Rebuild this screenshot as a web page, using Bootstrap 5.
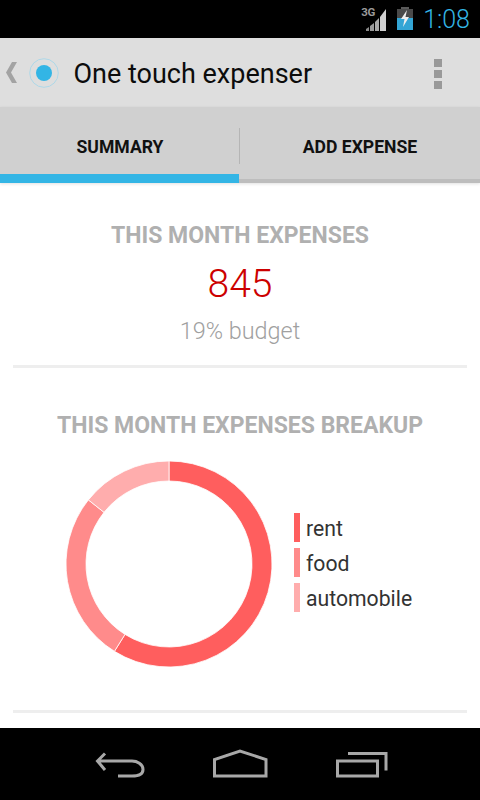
<!doctype html>
<html lang="en">
<head>
<meta charset="utf-8">
<title>One touch expenser</title>
<link rel="stylesheet" href="https://cdn.jsdelivr.net/npm/bootstrap@5.3.0/dist/css/bootstrap.min.css">
<style>
html,body{height:100%;margin:0;background:#000}
body{font-family:Roboto,"Liberation Sans",sans-serif;width:480px;height:800px;overflow:hidden}
.shell{height:800px;width:480px}
.statusbar{height:38px;background:#000;padding-right:10px}
.sig-wrap{width:28px;height:30px;margin-right:9px;margin-top:1px}
.net{font-size:11.500px;font-weight:700;color:#9a9a9a;line-height:1;position:absolute;left:1px;top:2px;letter-spacing:-.3px}
.clock{font-size:25px;color:#33b5e5;font-weight:300;line-height:38px;margin-left:10px;padding-top:1px}
.actionbar{height:69px;background:#dedede;padding-left:6px}
.appicon{margin-left:11.500px;flex:none}
.apptitle{font-size:27px;color:#0c0c0c;font-weight:400;margin-left:15px;line-height:1;margin-bottom:0;padding-top:4px}
.dots{gap:3px;margin-right:38px;margin-top:3px}
.dots i{display:block;width:8px;height:8px;background:#999}
.tabsbar{height:76px;background:#d0d0d0;border-bottom:4px solid #bdbdbd;position:relative;box-shadow:0 1px 3px rgba(0,0,0,.12)}
.tabitem{width:240px;height:72px;font-size:17.600px;font-weight:700;color:#111;position:relative;line-height:1;padding-top:10px}
.tabitem.on::after{content:"";position:absolute;left:0;right:1px;bottom:-4px;height:9px;background:#33b5e5}
.tabsep{position:absolute;left:239px;top:21px;width:1px;height:36px;background:#b5b5b5}
.pagebody{height:545px;background:#fff;overflow:hidden;padding:0 13px}
.block{border-bottom:3px solid #eeeeee}
.b-one{height:185px;padding-top:40px}
.b-two{height:345px;padding-top:45px}
.heading{font-size:23px;font-weight:700;color:#b0b0b0;line-height:26px;margin:0}
.amount{font-size:39px;font-weight:300;color:#cc0000;line-height:42px;margin-top:14px}
.budget{font-size:23.400px;font-weight:300;color:#a0a0a0;line-height:26px;margin-top:13px}
.chart-row{margin-top:22px;height:206px}
.donut{width:206px;height:206px;margin-left:53px;flex:none}
.legend{margin-left:22px;gap:6px;margin-top:-3px}
.lg-item{height:29px;font-size:21.200px;color:#333;line-height:31px}
.sw{display:block;width:6px;height:29px;margin-right:6px}
.c1{background:#ff5e5e}.c2{background:#ff8b8b}.c3{background:#ffadad}
.navbar-bot{height:72px;background:#000;flex:none}
</style>
</head>
<body>
<div class="shell d-flex flex-column">
  <div class="statusbar d-flex justify-content-end align-items-center">
    <div class="sig-wrap position-relative">
      <span class="net">3G</span>
      <svg width="28" height="30" viewBox="0 0 28 30"><g transform="translate(0 -3)"><path d="M6 29h3v-4l-3 2z" fill="#8a8a8a"/><path d="M10 29h4v-8l-4 3z" fill="#9a9a9a"/><path d="M15 29h4V16l-4 4z" fill="#a8a8a8"/><path d="M20 29h6V7l-6 8z" fill="#cfcfcf"/></g></svg>
    </div>
    <svg width="16" height="30" viewBox="0 0 16 30"><rect x="4" y="3" width="8" height="3" fill="#5a5a5a"/><rect x="0" y="5" width="16" height="9" fill="#4a4a4a"/><rect x="0" y="14" width="16" height="12" fill="#33a5d5"/><path d="M10 6 4 15h3.500L6 23l6-10H8.500z" fill="#eee"/></svg>
    <span class="clock">1:08</span>
  </div>
  <div class="actionbar d-flex align-items-center">
    <svg width="11" height="21" viewBox="0 0 11 21"><path d="M11 0 5 10.500 11 21H6L0 10.500 6 0z" fill="#a3a3a3"/></svg>
    <svg width="30" height="30" viewBox="0 0 30 30" class="appicon"><circle cx="15" cy="15" r="14.300" fill="none" stroke="#aed8e8" stroke-width="1"/><circle cx="15" cy="15" r="8" fill="#33b5e5"/></svg>
    <h1 class="apptitle flex-grow-1">One touch expenser</h1>
    <div class="dots d-flex flex-column"><i></i><i></i><i></i></div>
  </div>
  <div class="tabsbar d-flex">
    <div class="tabitem on d-flex align-items-center justify-content-center">SUMMARY</div>
    <div class="tabsep"></div>
    <div class="tabitem d-flex align-items-center justify-content-center">ADD EXPENSE</div>
  </div>
  <div class="pagebody flex-grow-1">
    <section class="block b-one text-center">
      <h2 class="heading">THIS MONTH EXPENSES</h2>
      <div class="amount">845</div>
      <div class="budget">19% budget</div>
    </section>
    <section class="block b-two text-center">
      <h2 class="heading">THIS MONTH EXPENSES BREAKUP</h2>
      <div class="chart-row d-flex align-items-center text-start">
        <svg class="donut" viewBox="-103 -103 206 206" id="pie"></svg>
        <div class="legend d-flex flex-column">
          <div class="lg-item d-flex"><span class="sw c1"></span>rent</div>
          <div class="lg-item d-flex"><span class="sw c2"></span>food</div>
          <div class="lg-item d-flex"><span class="sw c3"></span>automobile</div>
        </div>
      </div>
    </section>
  </div>
  <div class="navbar-bot d-flex justify-content-center align-items-center">
    <svg width="360" height="72" viewBox="0 0 360 70" fill="none" stroke="#a8a8a8" stroke-width="3">
      <path d="M45 24.500 37.500 32 45 41M37.500 32H72c5 0 11 3 11 8.500S77 47 72 47H58"/>
      <path d="M154.500 47V30.500L180 22l26 8.500V47z"/>
      <path d="M277.500 32h40v15h-40zM288 24.500h38v17"/>
    </svg>
  </div>
</div>
<script>
var s=[[0,212,'#ff5e5e'],[212,308.5,'#ff8b8b'],[308.5,360,'#ffadad']];
var svg=document.getElementById('pie'),h='';
function p(a,r){a=a*Math.PI/180;return (r*Math.sin(a)).toFixed(2)+' '+(-r*Math.cos(a)).toFixed(2)}
s.forEach(function(x){
  var l=x[1]-x[0]>180?1:0;
  h+='<path fill="'+x[2]+'" stroke="#fff" stroke-width=".8" d="M'+p(x[0],103)+'A103 103 0 '+l+' 1 '+p(x[1],103)+'L'+p(x[1],83)+'A83 83 0 '+l+' 0 '+p(x[0],83)+'Z"/>';
});
svg.innerHTML=h;
</script>
<script src="https://cdn.jsdelivr.net/npm/bootstrap@5.3.0/dist/js/bootstrap.bundle.min.js"></script>
</body>
</html>
